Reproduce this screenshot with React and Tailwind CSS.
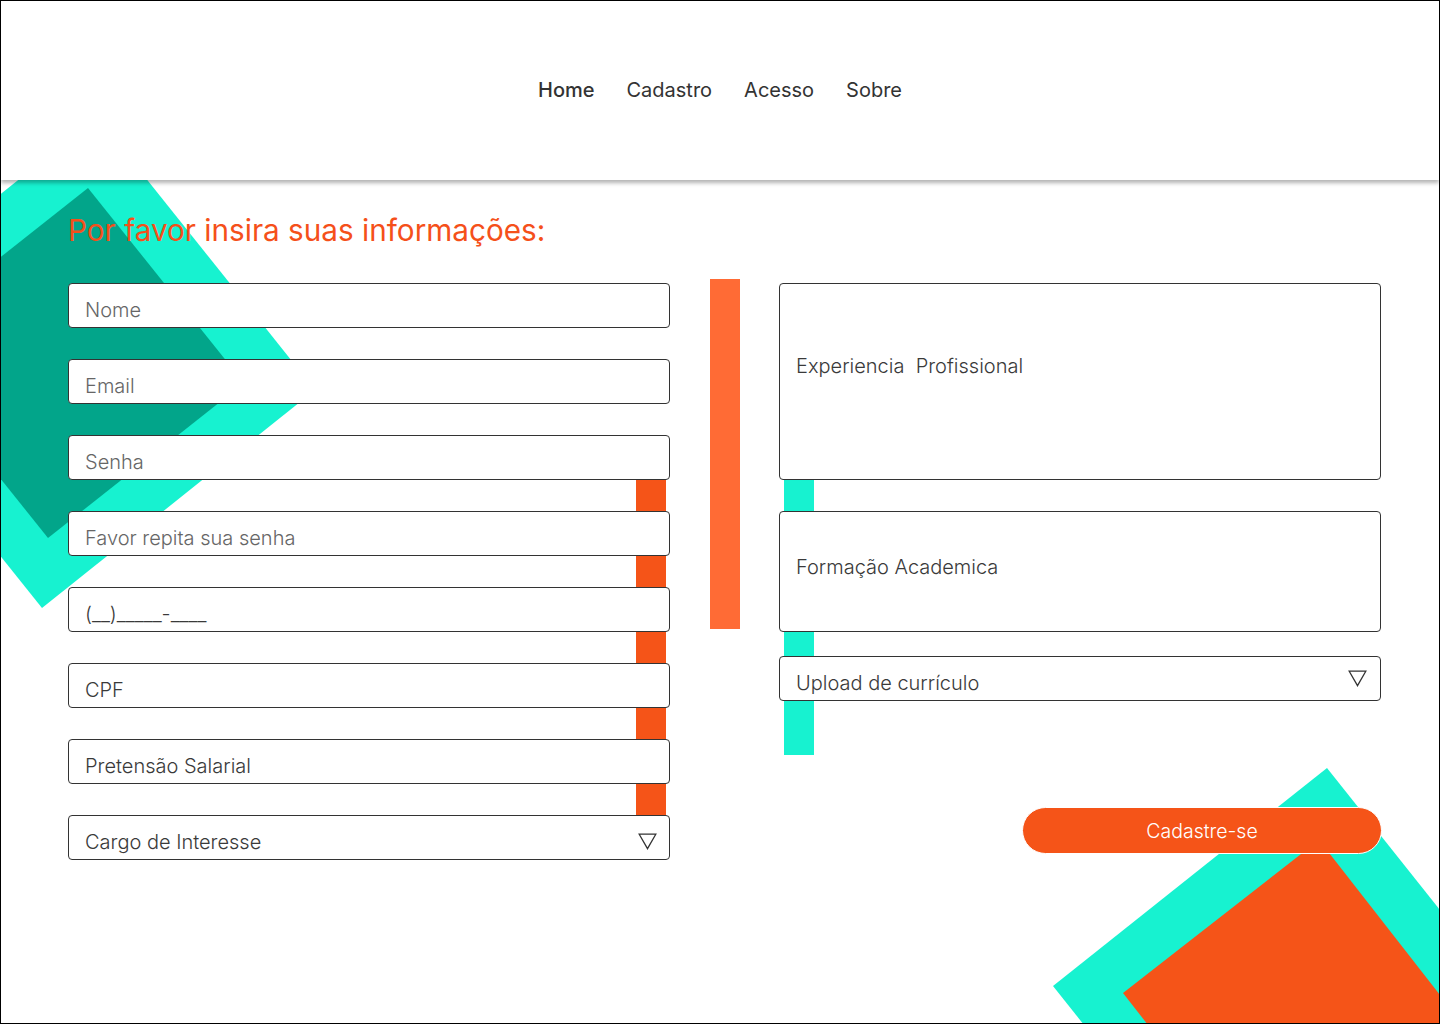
import React from 'react';

/**
 * Cadastro page
 * Header with centered nav, two-column sign-up form and decorative squares.
 */
const fieldsLeft = [
  { label: 'Nome', muted: true },
  { label: 'Email', muted: true },
  { label: 'Senha', muted: true },
  { label: 'Favor repita sua senha', muted: true },
  { label: '(__)_____-____', muted: false },
  { label: 'CPF', muted: false },
  { label: 'Pretensão Salarial', muted: false },
];

const Triangle = ({ className }) => (
  <svg className={className} width="19" height="17" viewBox="0 0 19 17" fill="none">
    <path d="M1.2 1.2 H17.8 L9.5 15.6 Z" stroke="#333" strokeWidth="1.3" strokeLinejoin="miter" />
  </svg>
);

const Field = ({ label, muted, select, triangleClass = 'top-[17px] right-[12px]' }) => (
  <div className="relative h-[45px] rounded-[4px] border border-[#333] bg-white px-4 pt-[15px]">
    <span
      className={`block text-[20px] leading-[23px] font-light ${muted ? 'text-[#666]' : 'text-[#3a3a3a]'}`}
    >
      {label}
    </span>
    {select && <Triangle className={`absolute ${triangleClass}`} />}
  </div>
);

const App = () => {
  return (
    <div
      className="relative w-[1440px] h-[1024px] overflow-hidden border border-black bg-white"
      style={{ fontFamily: 'Inter, "Noto Sans", sans-serif' }}
    >
      {/* decorative squares */}
      <svg
        className="absolute top-0 left-0 w-[1438px] h-[1022px]"
        viewBox="1 1 1438 1022"
        fill="none"
      >
        <polygon points="97,117 315,390 42,608 -176,335" fill="#17F2D0" />
        <polygon points="88,188 244,383 48,538 -108,343" fill="#02A58A" />
        <polygon points="1327,768 1545,1042 1271,1260 1053,986" fill="#17F2D0" />
        <polygon points="1319,840 1472,1036 1276,1189 1123,993" fill="#F55418" />
      </svg>

      {/* header */}
      <header className="relative z-10 flex h-[179px] items-center justify-center bg-white pb-[2px] shadow-[0_3px_4px_rgba(0,0,0,0.3)]">
        <nav className="flex items-center gap-8 text-[20px] text-[#333]">
          <a className="font-medium">Home</a>
          <a>Cadastro</a>
          <a>Acesso</a>
          <a>Sobre</a>
        </nav>
      </header>

      {/* form */}
      <main className="relative z-10 pl-[67px] pt-[32px]">
        <h1 className="text-[29.7px] leading-[36px] font-normal text-[#F5501A]">
          Por favor insira suas informações:
        </h1>

        <div className="mt-[35px] flex items-start">
          {/* left column */}
          <div className="relative flex w-[602px] flex-col gap-[31px]">
            <div className="absolute right-[4px] top-[197px] h-[335px] w-[30px] bg-[#F55418]" />
            {fieldsLeft.map((f) => (
              <Field key={f.label} label={f.label} muted={f.muted} />
            ))}
            <Field label="Cargo de Interesse" select />
          </div>

          {/* middle bar */}
          <div className="ml-[40px] -mt-[4px] h-[350px] w-[30px] bg-[#FF6B35]" />

          {/* right column */}
          <div className="relative ml-[39px] flex w-[602px] flex-col">
            <div className="absolute left-[5px] top-[197px] h-[275px] w-[30px] bg-[#17F2D0]" />
            <div className="relative h-[197px] rounded-[4px] border border-[#333] bg-white px-4 pt-[71px]">
              <span className="block text-[20px] leading-[23px] font-light text-[#3a3a3a] whitespace-pre">
                Experiencia  Profissional
              </span>
            </div>
            <div className="relative mt-[31px] h-[121px] rounded-[4px] border border-[#333] bg-white px-4 pt-[44px]">
              <span className="block text-[20px] leading-[23px] font-light text-[#3a3a3a]">
                Formação Academica
              </span>
            </div>
            <div className="mt-[24px]">
              <Field label="Upload de currículo" select triangleClass="top-[13px] right-[13px]" />
            </div>

            <button className="mt-[106px] -mr-[1px] h-[47px] w-[360px] self-end rounded-full border border-white bg-[#F55418] pt-[2px] text-[19.5px] font-light text-white">
              Cadastre-se
            </button>
          </div>
        </div>
      </main>
    </div>
  );
};

export default App;
